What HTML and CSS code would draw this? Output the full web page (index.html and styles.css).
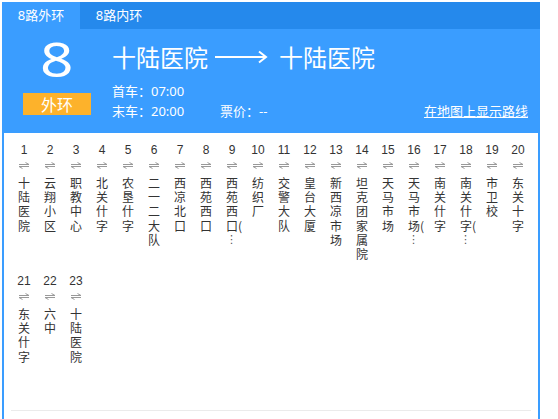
FILE: index.html
```html
<!DOCTYPE html>
<html lang="zh-CN">
<head>
<meta charset="utf-8">
<title>8路外环</title>
<link rel="stylesheet" href="styles.css">
</head>
<body>
<svg class="defs" width="0" height="0" aria-hidden="true">
  <symbol id="swap" viewBox="0 0 10 7">
    <path d="M0 2.5H10M10 2.5L6.5 0.5M0 4.5H10M0 4.5L3.5 6.5" fill="none" stroke="#999" stroke-width="1"/>
  </symbol>
</svg>
<div class="wrap">
  <div class="tabs">
    <div class="tab active">8路外环</div>
    <div class="tab">8路内环</div>
  </div>
  <div class="panel">
    <div class="head">
      <div class="left">
        <div class="big"><span class="bignum">8</span></div>
        <div class="badge">外环</div>
      </div>
      <div class="info">
        <div class="title">
          <span>十陆医院</span>
          <svg class="longarrow" width="53" height="14" viewBox="0 0 53 14"><path d="M0 7H50" stroke="#fff" stroke-width="2"/><path d="M44 1.5L51 7L44 12.5" fill="none" stroke="#fff" stroke-width="2"/></svg>
          <span>十陆医院</span>
        </div>
        <div class="line">首车：07:00</div>
        <div class="line row2">
          <span class="last">末车：20:00</span>
          <span>票价：--</span>
          <a class="maplink" href="#">在地图上显示路线</a>
        </div>
      </div>
    </div>
    <div class="body">
      <ul class="stops">
        <li class="stop"><span class="num">1</span><svg class="arr"><use href="#swap"/></svg><span class="name">十陆医院</span></li>
        <li class="stop"><span class="num">2</span><svg class="arr"><use href="#swap"/></svg><span class="name">云翔小区</span></li>
        <li class="stop"><span class="num">3</span><svg class="arr"><use href="#swap"/></svg><span class="name">职教中心</span></li>
        <li class="stop"><span class="num">4</span><svg class="arr"><use href="#swap"/></svg><span class="name">北关什字</span></li>
        <li class="stop"><span class="num">5</span><svg class="arr"><use href="#swap"/></svg><span class="name">农垦什字</span></li>
        <li class="stop"><span class="num">6</span><svg class="arr"><use href="#swap"/></svg><span class="name">二一二大队</span></li>
        <li class="stop"><span class="num">7</span><svg class="arr"><use href="#swap"/></svg><span class="name">西凉北口</span></li>
        <li class="stop"><span class="num">8</span><svg class="arr"><use href="#swap"/></svg><span class="name">西苑西口</span></li>
        <li class="stop"><span class="num">9</span><svg class="arr"><use href="#swap"/></svg><span class="name cut">西苑西口(</span></li>
        <li class="stop"><span class="num">10</span><svg class="arr"><use href="#swap"/></svg><span class="name">纺织厂</span></li>
        <li class="stop"><span class="num">11</span><svg class="arr"><use href="#swap"/></svg><span class="name">交警大队</span></li>
        <li class="stop"><span class="num">12</span><svg class="arr"><use href="#swap"/></svg><span class="name">皇台大厦</span></li>
        <li class="stop"><span class="num">13</span><svg class="arr"><use href="#swap"/></svg><span class="name">新西凉市场</span></li>
        <li class="stop"><span class="num">14</span><svg class="arr"><use href="#swap"/></svg><span class="name">坦克团家属院</span></li>
        <li class="stop"><span class="num">15</span><svg class="arr"><use href="#swap"/></svg><span class="name">天马市场</span></li>
        <li class="stop"><span class="num">16</span><svg class="arr"><use href="#swap"/></svg><span class="name cut">天马市场(</span></li>
        <li class="stop"><span class="num">17</span><svg class="arr"><use href="#swap"/></svg><span class="name">南关什字</span></li>
        <li class="stop"><span class="num">18</span><svg class="arr"><use href="#swap"/></svg><span class="name cut">南关什字(</span></li>
        <li class="stop"><span class="num">19</span><svg class="arr"><use href="#swap"/></svg><span class="name">市卫校</span></li>
        <li class="stop"><span class="num">20</span><svg class="arr"><use href="#swap"/></svg><span class="name">东关十字</span></li>
        <li class="stop"><span class="num">21</span><svg class="arr"><use href="#swap"/></svg><span class="name">东关什字</span></li>
        <li class="stop"><span class="num">22</span><svg class="arr"><use href="#swap"/></svg><span class="name">六中</span></li>
        <li class="stop"><span class="num">23</span><svg class="arr"><use href="#swap"/></svg><span class="name">十陆医院</span></li>
      </ul>
      <div class="sep"></div>
    </div>
  </div>
</div>
</body>
</html>
```

FILE: styles.css
```css
* { box-sizing: border-box; }
html, body { margin: 0; padding: 0; background: #fff; }
body {
  padding: 2px 0 0 2px;
  font-family: "Noto Sans", "Noto Sans CJK SC", sans-serif;
  color: #333;
}
.defs { position: absolute; width: 0; height: 0; overflow: hidden; }
.wrap { width: 538px; }
.tabs {
  display: flex;
  height: 27px;
  background: #2589ec;
}
.tab {
  width: 78px;
  color: #fff;
  font-size: 13px;
  line-height: 27px;
  text-align: center;
}
.tab.active { background: #3a9dff; }
.panel {
  border: 2px solid #3a9dff;
  border-top: none;
}
.head {
  display: flex;
  height: 104px;
  background: #3a9dff;
  color: #fff;
}
.left {
  width: 106px;
  display: flex;
  flex-direction: column;
  align-items: center;
}
.big {
  margin-top: 6px;
  font-family: "Noto Sans", sans-serif;
  font-size: 48px;
  line-height: 48px;
  height: 48px;
}
.bignum {
  display: inline-block;
  transform: scaleX(1.22);
}
.badge {
  margin-top: 10px;
  width: 68px;
  height: 22px;
  background: #fdb22b;
  color: #fff;
  font-family: "Noto Sans CJK SC", sans-serif;
  font-size: 16px;
  line-height: 22px;
  text-align: center;
}
.info {
  flex: 1;
  padding: 12px 10px 0 2px;
}
.title {
  display: flex;
  align-items: center;
  gap: 7px;
  height: 32px;
  font-family: "Noto Sans CJK SC", sans-serif;
  font-size: 24px;
  line-height: 32px;
}
.longarrow { display: block; margin-right: 4px; }
.line {
  font-size: 13px;
  line-height: 20px;
}
.title + .line { margin-top: 8px; }
.row2 { display: flex; }
.last { width: 108px; }
.maplink {
  margin-left: auto;
  color: #fff;
  text-decoration: underline;
}
.body {
  background: #fff;
  padding: 9px 5px 0 5px;
  height: 290px;
}
.stops {
  list-style: none;
  margin: 0;
  padding: 0;
  display: flex;
  flex-wrap: wrap;
  width: 520px;
  margin-left: 2px;
}
.stop {
  width: 26px;
  height: 131px;
  display: flex;
  flex-direction: column;
  align-items: center;
}
.num {
  font-family: "Liberation Sans", Arial, sans-serif;
  font-size: 12px;
  line-height: 16px;
  color: #333;
}
.arr {
  display: block;
  width: 10px;
  height: 7px;
  margin-top: 4px;
  margin-bottom: 7px;
}
.name {
  display: block;
  width: 12px;
  font-family: "Noto Sans CJK SC", sans-serif;
  font-size: 12px;
  line-height: 14.2px;
  color: #333;
}
.name.cut {
  width: 17px;
  margin-right: -5px;
  line-break: anywhere;
  word-break: keep-all;
}
.name.cut::after {
  content: "⋮";
  display: block;
  width: 12px;
  line-height: 14px;
  font-family: "DejaVu Sans", sans-serif;
  font-size: 11px;
  color: #555;
}
.sep {
  margin: 6px 0 0 2px;
  width: 520px;
  border-top: 1px solid #ebebeb;
}
```
